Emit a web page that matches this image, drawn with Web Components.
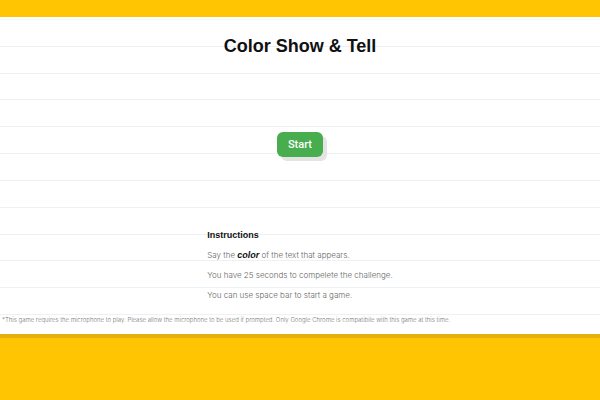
<!DOCTYPE html>
<html lang="en">
<head>
<meta charset="utf-8">
<title>Color Show &amp; Tell</title>
<style>
html, body { margin: 0; }
body { background: #ffc502; min-height: 100vh; font-family: "Liberation Sans", Arial, sans-serif; color: #111; }
game-instructions b { color: #111; font: italic bold 9px "Liberation Sans", Arial, sans-serif; }
</style>
</head>
<body>
<game-page>
  <span slot="title">Color Show &amp; Tell</span>
  <start-button slot="action">Start</start-button>
  <game-instructions slot="help">
    <span slot="heading">Instructions</span>
    <p>Say the <b>color</b> of the text that appears.</p>
    <p>You have 25 seconds to compelete the challenge.</p>
    <p>You can use space bar to start a game.</p>
  </game-instructions>
  <span slot="note">*This game requires the microphone to play. Please allow the microphone to be used if prompted. Only Google Chrome is compatibile with this game at this time.</span>
</game-page>
<script>
class ShadowElement extends HTMLElement {
  constructor() {
    super();
    this.attachShadow({ mode: "open" }).innerHTML = this.constructor.markup;
  }
}

class RuledLines extends ShadowElement {
  static markup = `
    <style>
      :host { display: flex; flex-direction: column; justify-content: space-between; }
      i { height: 1px; background: #ecf1f6; }
      i:first-of-type { background: #f8fafa; }
    </style>${"<i></i>".repeat(12)}`;
}

class StartButton extends ShadowElement {
  static markup = `
    <style>
      :host { display: block; }
      button { display: block; border: 0; border-radius: 6px; padding: 0 11px; height: 25px;
        background: #47ad4e; color: #fff; font: 500 11px/25px Roboto, sans-serif;
        box-shadow: 4px 4px 0 #e4e4e4; cursor: pointer; }
    </style>
    <button type="button"><slot></slot></button>`;
}

class GameInstructions extends ShadowElement {
  static markup = `
    <style>
      :host { display: block; color: #666; font: 300 8px/12px Inter, sans-serif; }
      h2 { margin: 0; color: #111; font: bold 9px/12px "Liberation Sans", Arial, sans-serif; }
      ::slotted(p) { margin: 8px 0 0; }
    </style>
    <h2><slot name="heading"></slot></h2>
    <slot></slot>`;
}

class GamePage extends ShadowElement {
  static markup = `
    <style>
      :host { display: block; padding-top: 17px; }
      main { position: relative; display: flex; flex-direction: column; align-items: center;
        background: #fff; box-shadow: 0 4px 0 #e3b010; padding: 18px 0 9px; }
      ruled-lines { position: absolute; inset: 2px 0 19px; }
      h1 { position: relative; margin: 0; font: bold 18px/22px "Liberation Sans", Arial, sans-serif; }
      .action { position: relative; margin-top: 75px; }
      .help { position: relative; margin-top: 72px; }
      small { position: relative; align-self: flex-start; margin: 14px 2px 0; color: #777;
        font: 300 6px/10px Inter, sans-serif; }
    </style>
    <main>
      <ruled-lines></ruled-lines>
      <h1><slot name="title"></slot></h1>
      <div class="action"><slot name="action"></slot></div>
      <div class="help"><slot name="help"></slot></div>
      <small><slot name="note"></slot></small>
    </main>`;
}

customElements.define("ruled-lines", RuledLines);
customElements.define("start-button", StartButton);
customElements.define("game-instructions", GameInstructions);
customElements.define("game-page", GamePage);
</script>
</body>
</html>
